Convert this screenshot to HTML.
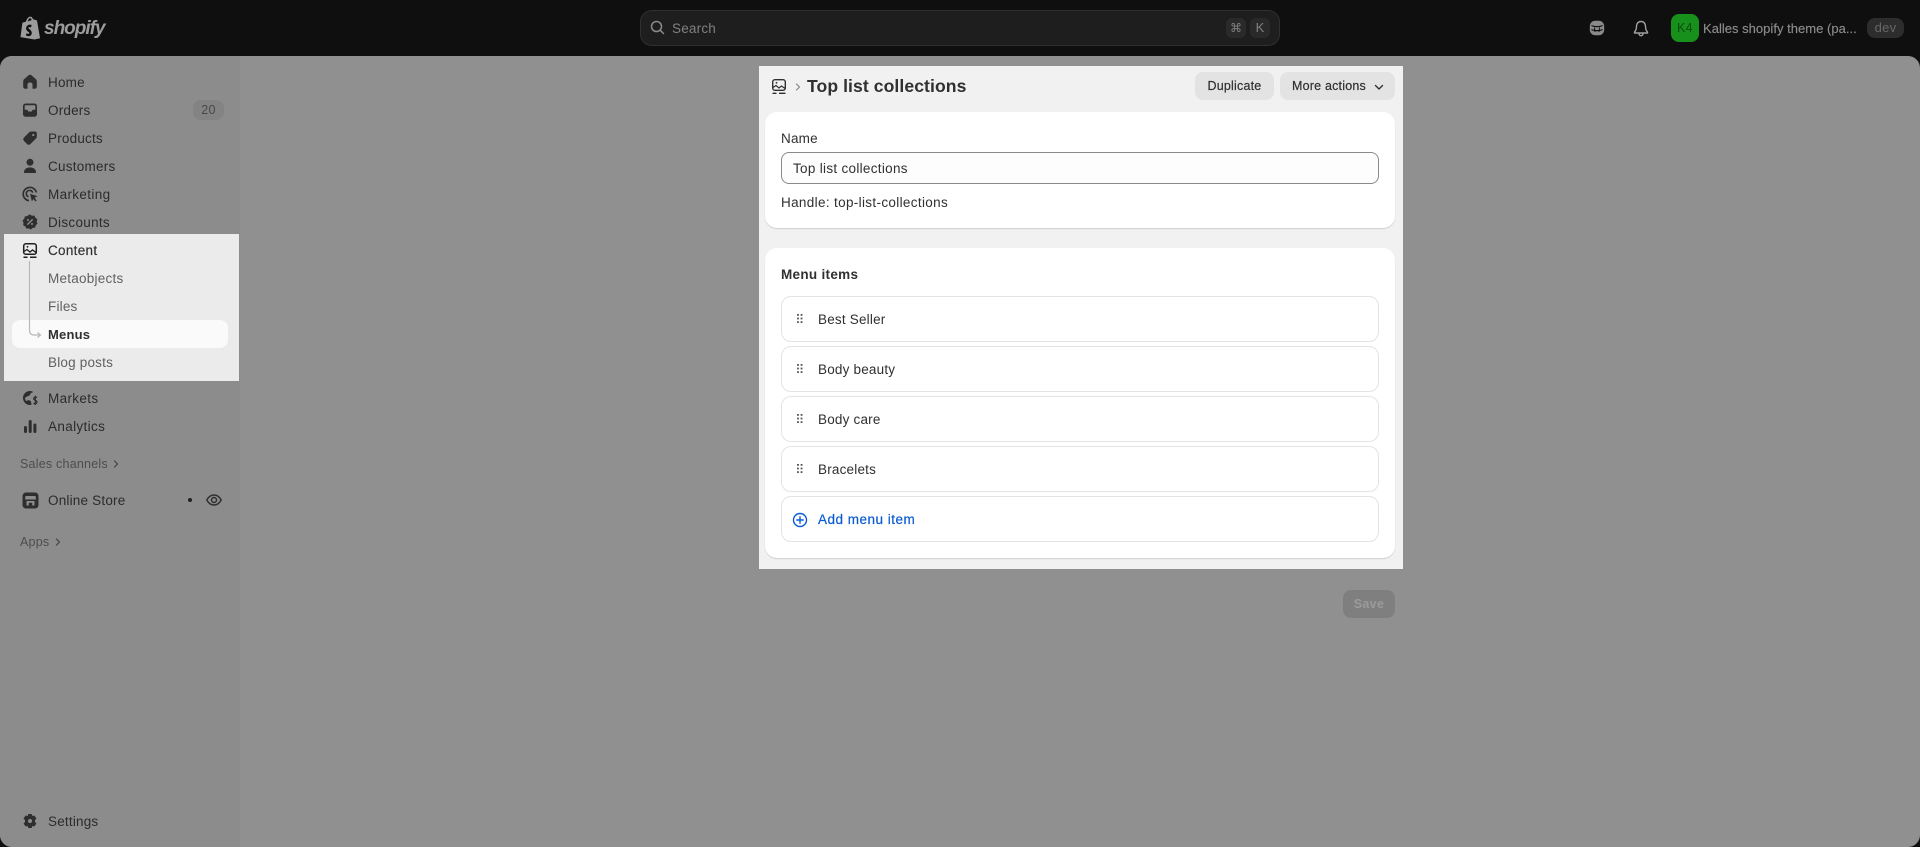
<!DOCTYPE html>
<html lang="en"><head><meta charset="utf-8"><title>Top list collections</title>
<style>
*{box-sizing:border-box}
html,body{margin:0;padding:0;width:1920px;height:847px;overflow:hidden;background:#0f0f0f;font-family:"Liberation Sans",sans-serif}
.a{position:absolute}
.t{position:absolute;white-space:nowrap;height:20px;line-height:20px;font-size:13.5px;letter-spacing:.2px;margin-top:1px}
.n{color:#2b2b2b}
.g{color:#5c5c5c}
svg{position:absolute;display:block}
.row{position:absolute;left:781px;width:598px;height:46px;background:#fff;border:1px solid #e3e3e3;border-radius:10px}
.dots{position:absolute;left:15px;top:17px;width:5.500px;height:9px}
.rowt{position:absolute;left:36px;top:13px;height:20px;line-height:20px;font-size:13.5px;letter-spacing:.2px;color:#303030;white-space:nowrap}
.btn{position:absolute;top:72px;height:28px;background:#e3e3e3;border-radius:8px;color:#303030;font-size:12.5px;font-weight:400;letter-spacing:.2px;line-height:28px;white-space:nowrap;-webkit-text-stroke:.2px #303030}
.card{position:absolute;left:765px;width:630px;background:#fff;border-radius:12px;box-shadow:0 1px 1px rgba(0,0,0,.14)}
</style></head><body>

<!-- main shell -->
<div class="a" style="left:0;top:56px;width:1920px;height:791px;background:#909090;border-radius:12px;overflow:hidden">
  <div class="a" style="left:0;top:0;width:240px;height:791px;background:#8c8c8c"></div>
</div>

<!-- top bar -->
<svg style="left:20px;top:15px" width="21" height="26" viewBox="0 0 22 26"><path d="M15 4.200 13.600 3.700C13 2 12 1 10.800 1.100 9 1.200 7 3.300 6.200 6.300L2.500 7.500.5 22.500 15.200 25 21 23.700 17.800 5.200Z" fill="#9c9c9c"/><path d="M12.200 9.800 11.500 12.400C10.500 12 9.300 11.800 8.700 12.500 8.200 14 12.800 14.800 12.300 18.800 11.900 21.600 8.500 22.300 6.300 20.700L6.800 18.400C8 19.300 9.500 19.600 9.800 18.500 9.900 16.800 6 16.500 6.400 13 6.800 10 9.800 8.800 12.200 9.800Z" fill="#0f0f0f"/><path d="M8 6 12.200 4.800C11.800 3.500 11.300 2.800 10.700 2.700 9.700 2.800 8.600 4.200 8 6Z" fill="#0f0f0f"/></svg>
<div class="t" style="left:44px;top:17px;height:22px;line-height:22px;font-size:19px;font-weight:700;font-style:italic;color:#9c9c9c;letter-spacing:-1px">shopify</div>

<div class="a" style="left:640px;top:10px;width:640px;height:36px;background:#1e1e1e;border:1px solid #303030;border-radius:12px"></div>
<svg style="left:650px;top:20px" width="15" height="15" viewBox="0 0 15 15" fill="none" stroke="#8a8a8a" stroke-width="1.500" stroke-linecap="round"><circle cx="6.500" cy="6.500" r="5"/><path d="M10.300 10.300 13.500 13.500"/></svg>
<div class="t" style="left:672px;top:18px;color:#808080">Search</div>
<div class="a" style="left:1226px;top:18px;width:20px;height:20px;background:#2a2a2a;border-radius:6px;color:#808080;font-size:12px;line-height:20px;text-align:center;font-family:'DejaVu Sans',sans-serif">⌘</div>
<div class="a" style="left:1250px;top:18px;width:20px;height:20px;background:#2a2a2a;border-radius:6px;color:#808080;font-size:13px;line-height:20px;text-align:center">K</div>

<svg style="left:1589px;top:20px" width="16" height="16" viewBox="0 0 16 16"><rect x=".8" y=".8" width="14.400" height="14.400" rx="5.500" fill="#8a8a8a"/><path d="M2.500 5.500C5 7 11 7 13.500 5.500M2.500 9.500C5 11 11 11 13.500 9.500" fill="none" stroke="#0f0f0f" stroke-width="1.200"/><path d="M5.500 7.500 6 12M10.500 7.500 10 12" fill="none" stroke="#0f0f0f" stroke-width="1"/></svg>
<svg style="left:1633px;top:20px" width="16" height="17" viewBox="0 0 16 17" fill="none" stroke="#a0a0a0" stroke-width="1.400" stroke-linejoin="round"><path d="M8 1.500c-2.800 0-4.500 2-4.500 4.700 0 3-.6 4.400-2 5.800v1h13v-1c-1.400-1.400-2-2.800-2-5.800C12.500 3.500 10.800 1.500 8 1.500Z"/><path d="M6 13.500c0 1.300.9 2.200 2 2.200s2-.9 2-2.200"/></svg>
<div class="a" style="left:1671px;top:14px;width:28px;height:28px;background:#17911b;border-radius:8px;color:#0c4d0f;font-size:12.5px;line-height:28px;text-align:center;letter-spacing:.3px">K4</div>
<div class="t" style="left:1703px;top:18px;font-size:13px;color:#8c8c8c;letter-spacing:.02px;-webkit-text-stroke:.15px #8c8c8c">Kalles shopify theme (pa...</div>
<div class="a" style="left:1867px;top:18px;width:37px;height:20px;background:#2d2d2d;border-radius:8px;color:#686868;font-size:13px;line-height:20px;text-align:center;letter-spacing:.3px">dev</div>

<!-- sidebar nav -->
<svg style="left:22px;top:74px" width="16" height="16" viewBox="0 0 16 16"><path d="M8 .8C7.300.8 6.800 1.100 6.300 1.500L2.300 5C1.500 5.700 1.200 6.400 1.200 7.400V12.500C1.200 14 2 14.800 3.500 14.800H5.500V10.500C5.500 9.300 6.500 8.500 8 8.500S10.500 9.300 10.500 10.500V14.800H12.500C14 14.800 14.800 14 14.800 12.500V7.400C14.800 6.400 14.500 5.700 13.700 5L9.700 1.500C9.200 1.100 8.700.8 8 .8Z" fill="#2e2e2e"/></svg>
<div class="t n" style="left:48px;top:72px">Home</div>

<svg style="left:22px;top:102px" width="16" height="16" viewBox="0 0 16 16"><path d="M4 1.500H12C14 1.500 15 2.500 15 4.500V12C15 13.500 14 14.800 12 14.800H4C2 14.800 1 13.500 1 12V4.500C1 2.500 2 1.500 4 1.500Z" fill="#2e2e2e"/><path d="M3.500 3.300H12.500C13 3.300 13.300 3.600 13.300 4.100V7.800H10.600L9.800 9.500H6.200L5.400 7.800H2.700V4.100C2.700 3.600 3 3.300 3.500 3.300Z" fill="#8c8c8c"/></svg>
<div class="t n" style="left:48px;top:100px">Orders</div>
<div class="a" style="left:193px;top:100px;width:31px;height:20px;background:#838383;border-radius:8px;color:#484848;font-size:12.500px;line-height:20px;text-align:center;letter-spacing:.3px">20</div>

<svg style="left:22px;top:130px" width="16" height="16" viewBox="0 0 16 16"><path d="M9.500 1.500H13C14 1.500 14.800 2.300 14.800 3.300V6.700C14.800 7.400 14.500 8 14 8.500L8.500 14C7.500 15 6 15 5 14L2 11C1 10 1 8.500 2 7.500L7.500 2C8 1.600 8.700 1.500 9.500 1.500Z" fill="#2e2e2e"/><circle cx="11.300" cy="5" r="1.100" fill="#8c8c8c"/></svg>
<div class="t n" style="left:48px;top:128px">Products</div>

<svg style="left:22px;top:158px" width="16" height="16" viewBox="0 0 16 16" fill="#2e2e2e"><circle cx="8" cy="4.300" r="3.500"/><path d="M2 14.200C2 11.300 4.500 9.400 8 9.400S14 11.300 14 14.200C14 14.800 13.600 15 13 15H3C2.400 15 2 14.800 2 14.200Z"/></svg>
<div class="t n" style="left:48px;top:156px;letter-spacing:.25px">Customers</div>

<svg style="left:22px;top:186px" width="17" height="17" viewBox="0 0 17 17" fill="none" stroke="#2e2e2e" stroke-width="1.600"><path d="M7 14.700A6.700 6.700 0 1 1 14.400 6.500"/><path d="M6.500 10.800A3.300 3.300 0 1 1 10.700 6.600"/><path d="M8 7.800 15.500 10.300 12.600 11.800 14.600 14.500 13.600 15.500 11.300 13 9.900 15.500Z" fill="#2e2e2e" stroke="none"/></svg>
<div class="t n" style="left:48px;top:184px;letter-spacing:.35px">Marketing</div>

<svg style="left:22px;top:214px" width="16" height="16" viewBox="0 0 16 16"><path d="M8 .5 10 1.700 12.400 1.500 13.300 3.700 15.300 5 14.700 7.500 15.500 9.800 13.700 11.300 13.200 13.600 10.800 13.900 8.800 15.500 6.800 14.400 4.400 14.600 3.300 12.400 1.200 11.200 1.500 8.700.5 6.500 2.300 4.800 2.800 2.500 5.200 2 7 .8Z" fill="#2e2e2e"/><path d="M10.300 5.700 5.700 10.300" stroke="#8c8c8c" stroke-width="1.400" stroke-linecap="round"/><circle cx="6" cy="6" r="1" fill="#8c8c8c"/><circle cx="10" cy="10" r="1" fill="#8c8c8c"/></svg>
<div class="t n" style="left:48px;top:212px;letter-spacing:.3px">Discounts</div>

<!-- highlighted block -->
<div class="a" style="left:4px;top:234px;width:235px;height:147px;background:#ebebeb"></div>
<div class="a" style="left:12px;top:320px;width:216px;height:28px;background:#fafafa;border-radius:8px"></div>
<svg style="left:22px;top:242px" width="16" height="18" viewBox="0 0 16 18" fill="none" stroke="#1f1f1f" stroke-width="1.500"><rect x="1.700" y="1.700" width="12.600" height="10.600" rx="2.200"/><path d="M2 9.500 5 7.500 8 10 10.500 8 14 10.500" stroke-width="1.300"/><circle cx="5.500" cy="4.800" r=".9" fill="#1f1f1f" stroke="none"/><path d="M1.500 15.300H5.500M8 15.300H14.500"/></svg>
<svg style="left:26px;top:258px" width="18" height="82" viewBox="0 0 18 82" fill="none" stroke="#b9b9b9" stroke-width="1.200"><path d="M3.500 3V72C3.500 75 5 77 8 77H14M11.500 74.500 14.500 77 11.500 79.500"/></svg>
<div class="t" style="left:48px;top:240px;color:#303030;-webkit-text-stroke:.15px #303030;letter-spacing:.3px">Content</div>
<div class="t" style="left:48px;top:268px;color:#616161;letter-spacing:.25px">Metaobjects</div>
<div class="t" style="left:48px;top:296px;color:#616161">Files</div>
<div class="t" style="left:48px;top:324px;color:#303030;font-weight:700;font-size:13px">Menus</div>
<div class="t" style="left:48px;top:352px;color:#616161">Blog posts</div>

<svg style="left:22px;top:390px" width="17" height="17" viewBox="0 0 17 17"><path d="M8 1A7 7 0 0 0 8 15C8.500 15 9 15 9.500 14.800L9 11.500 7 10 4 11 2.800 8 5 6.500 7.500 5.500 9 3 11.300 2A7 7 0 0 0 8 1Z" fill="#2e2e2e"/><path d="M15 7.500C14 6.800 11.700 7 11.700 8.700S15 10.200 15 12 12.700 14 11.500 13.300M13.300 5.800V15" fill="none" stroke="#2e2e2e" stroke-width="1.200"/></svg>
<div class="t n" style="left:48px;top:388px;letter-spacing:.35px">Markets</div>

<svg style="left:22px;top:418px" width="16" height="16" viewBox="0 0 16 16" fill="#2e2e2e"><rect x="2" y="8" width="3" height="7" rx="1.500"/><rect x="6.700" y="2" width="3" height="13" rx="1.500"/><rect x="11.400" y="5.500" width="3" height="9.500" rx="1.500"/></svg>
<div class="t n" style="left:48px;top:416px;letter-spacing:.35px">Analytics</div>

<div class="t" style="left:20px;top:454px;margin-top:0;font-size:12.500px;color:#4d4d4d;letter-spacing:.22px">Sales channels</div>
<svg style="left:111px;top:459px" width="10" height="10" viewBox="0 0 10 10" fill="none" stroke="#4d4d4d" stroke-width="1.300" stroke-linecap="round" stroke-linejoin="round"><path d="M3.500 2 6.500 5 3.500 8"/></svg>

<svg style="left:22px;top:492px" width="17" height="17" viewBox="0 0 17 17"><rect x=".5" y=".5" width="16" height="16" rx="3.500" fill="#2e2e2e"/><path d="M3.500 4H13.500L14 7.500H3Z" fill="#8c8c8c"/><path d="M4.500 9H12.500V13.500H10.200V10.800H6.800V13.500H4.500Z" fill="#8c8c8c"/></svg>
<div class="t n" style="left:48px;top:490px">Online Store</div>
<div class="a" style="left:188px;top:498px;width:4px;height:4px;background:#202020;border-radius:50%"></div>
<svg style="left:206px;top:492px" width="16" height="16" viewBox="0 0 16 16" fill="none" stroke="#2e2e2e" stroke-width="1.400"><path d="M.8 8C2.500 4.800 5 3 8 3S13.500 4.800 15.200 8C13.500 11.200 11 13 8 13S2.500 11.200.8 8Z"/><circle cx="8" cy="8" r="2.500"/></svg>

<div class="t" style="left:20px;top:532px;margin-top:0;font-size:12.500px;color:#4d4d4d;letter-spacing:.22px">Apps</div>
<svg style="left:53px;top:537px" width="10" height="10" viewBox="0 0 10 10" fill="none" stroke="#4d4d4d" stroke-width="1.300" stroke-linecap="round" stroke-linejoin="round"><path d="M3.500 2 6.500 5 3.500 8"/></svg>

<svg style="left:22px;top:813px" width="16" height="16" viewBox="0 0 16 16"><path d="M6.300 1H9.700L10.300 3 12.300 2.500 14.500 5.500 13 7 13 9 14.500 10.500 12.300 13.500 10.300 13 9.700 15H6.300L5.700 13 3.700 13.500 1.500 10.500 3 9 3 7 1.500 5.500 3.700 2.500 5.700 3Z" fill="#2e2e2e"/><circle cx="8" cy="8" r="2" fill="#8c8c8c"/></svg>
<div class="t n" style="left:48px;top:811px">Settings</div>

<!-- modal -->
<div class="a" style="left:759px;top:66px;width:644px;height:503px;background:#f1f1f1"></div>
<svg style="left:771px;top:78px" width="16" height="18" viewBox="0 0 16 18" fill="none" stroke="#303030" stroke-width="1.400"><rect x="1.700" y="1.700" width="12.600" height="10.600" rx="2.200"/><path d="M2 9.500 5 7.500 8 10 10.500 8 14 10.500" stroke-width="1.200"/><circle cx="5.500" cy="4.800" r=".9" fill="#303030" stroke="none"/><path d="M1.500 15.300H5.500M8 15.300H14.500"/></svg>
<svg style="left:793px;top:81px" width="10" height="12" viewBox="0 0 10 12" fill="none" stroke="#8a8a8a" stroke-width="1.200" stroke-linecap="round" stroke-linejoin="round"><path d="M3.500 3 6.500 6 3.500 9"/></svg>
<div class="t" style="left:807px;top:74px;margin-top:0;height:24px;line-height:24px;font-size:17.600px;font-weight:700;color:#303030;letter-spacing:.07px">Top list collections</div>

<div class="btn" style="left:1195px;width:79px;text-align:center">Duplicate</div>
<div class="btn" style="left:1280px;width:115px;padding-left:12px">More actions</div>
<svg style="left:1372px;top:80px" width="14" height="14" viewBox="0 0 14 14" fill="none" stroke="#303030" stroke-width="1.400" stroke-linecap="round" stroke-linejoin="round"><path d="M3.500 5.500 7 9 10.500 5.500"/></svg>

<div class="card" style="top:112px;height:116px"></div>
<div class="t" style="left:781px;top:128px;color:#303030">Name</div>
<div class="a" style="left:781px;top:152px;width:598px;height:32px;background:#fdfdfd;border:1px solid #8a8a8a;border-radius:8px"></div>
<div class="t" style="left:793px;top:158px;color:#303030;letter-spacing:.3px">Top list collections</div>
<div class="t" style="left:781px;top:192px;color:#303030;letter-spacing:.34px">Handle: top-list-collections</div>

<div class="card" style="top:248px;height:310px"></div>
<div class="t" style="left:781px;top:264px;color:#303030;font-weight:700;font-size:13.500px;letter-spacing:.3px">Menu items</div>

<div class="row" style="top:296px"><svg class="dots" viewBox="0 0 6 10" fill="#555"><rect width="2" height="2"/><rect x="4" width="2" height="2"/><rect y="4" width="2" height="2"/><rect x="4" y="4" width="2" height="2"/><rect y="8" width="2" height="2"/><rect x="4" y="8" width="2" height="2"/></svg><div class="rowt">Best Seller</div></div>
<div class="row" style="top:346px"><svg class="dots" viewBox="0 0 6 10" fill="#555"><rect width="2" height="2"/><rect x="4" width="2" height="2"/><rect y="4" width="2" height="2"/><rect x="4" y="4" width="2" height="2"/><rect y="8" width="2" height="2"/><rect x="4" y="8" width="2" height="2"/></svg><div class="rowt">Body beauty</div></div>
<div class="row" style="top:396px"><svg class="dots" viewBox="0 0 6 10" fill="#555"><rect width="2" height="2"/><rect x="4" width="2" height="2"/><rect y="4" width="2" height="2"/><rect x="4" y="4" width="2" height="2"/><rect y="8" width="2" height="2"/><rect x="4" y="8" width="2" height="2"/></svg><div class="rowt">Body care</div></div>
<div class="row" style="top:446px"><svg class="dots" viewBox="0 0 6 10" fill="#555"><rect width="2" height="2"/><rect x="4" width="2" height="2"/><rect y="4" width="2" height="2"/><rect x="4" y="4" width="2" height="2"/><rect y="8" width="2" height="2"/><rect x="4" y="8" width="2" height="2"/></svg><div class="rowt">Bracelets</div></div>
<div class="row" style="top:496px"><svg style="left:10px;top:15px" width="16" height="16" viewBox="0 0 16 16" fill="none" stroke="#0a5bd3" stroke-width="1.400" stroke-linecap="round"><circle cx="8" cy="8" r="6.500"/><path d="M8 4.800V11.200M4.800 8H11.200"/></svg><div class="rowt" style="color:#0a5bd3;-webkit-text-stroke:.2px #0a5bd3;letter-spacing:.5px">Add menu item</div></div>

<!-- save -->
<div class="a" style="left:1343px;top:590px;width:52px;height:28px;background:#7f7f7f;border-radius:8px;color:#9b9b9b;font-size:12.500px;font-weight:700;line-height:28px;text-align:center;letter-spacing:.3px">Save</div>

</body></html>
